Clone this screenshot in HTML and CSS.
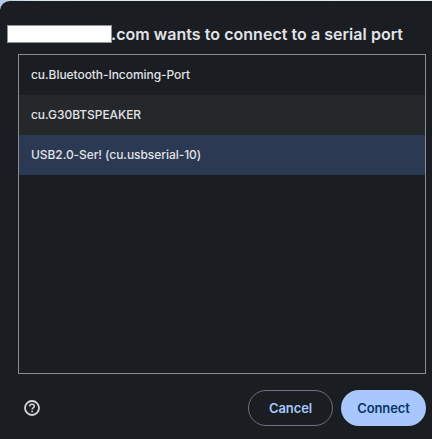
FILE: index.html
```html
<!DOCTYPE html>
<html lang="en">
<head>
<meta charset="utf-8">
<title>Serial port chooser</title>
<link rel="stylesheet" href="styles.css">
</head>
<body>
<main class="dialog">
  <h1 class="title"><span class="redacted"></span><span class="title-text">.com wants to connect to a serial port</span></h1>
  <ul class="ports">
    <li class="port">cu.Bluetooth-Incoming-Port</li>
    <li class="port port-alt">cu.G30BTSPEAKER</li>
    <li class="port port-selected">USB2.0-Ser! (cu.usbserial-10)</li>
  </ul>
  <footer class="actions">
    <svg class="help" viewBox="0 0 16 16" width="16" height="16" fill="none">
      <circle cx="8" cy="8" r="7" stroke="#d3d5d9" stroke-width="1.8"/>
      <path d="M5.7 6.5C5.7 5.1 6.6 4.3 8 4.3s2.3.8 2.3 2c0 1.6-2.2 1.6-2.2 3.3" stroke="#d3d5d9" stroke-width="1.5"/>
      <circle cx="8.1" cy="11.5" r=".9" fill="#d3d5d9"/>
    </svg>
    <button class="button cancel">Cancel</button>
    <button class="button connect">Connect</button>
  </footer>
</main>
</body>
</html>
```
FILE: styles.css
```css
* { box-sizing: border-box; }
body {
  margin: 0;
  height: 439px;
  background: linear-gradient(90deg, #b3c8ec 0, #dce9ee 40px, #e0ecec 100%);
  font-family: Inter, "Liberation Sans", sans-serif;
  overflow: hidden;
}
.dialog {
  height: 439px;
  padding: 24px 6px 0 7px;
  border-top: 1px solid transparent;
  border-radius: 10px 0 0 0;
  background: #1a1d21 padding-box;
}
.title {
  display: flex;
  align-items: center;
  height: 18px;
  margin: 0;
  color: #e1e3e8;
  font-size: 16px;
  font-weight: 600;
  line-height: 18px;
  white-space: nowrap;
}
.redacted {
  width: 105px;
  height: 18px;
  border: 1px solid #909294;
  background: #fff;
}
.title-text {
  margin-left: -1px;
  letter-spacing: 0.04px;
}
.ports {
  height: 320px;
  margin: 11px 0 0 11px;
  padding: 0;
  border: 1px solid #898c92;
  list-style: none;
}
.port {
  height: 40px;
  padding-left: 12px;
  color: #e1e3e7;
  font-size: 12px;
  font-weight: 450;
  letter-spacing: -0.06px;
  line-height: 40px;
  white-space: nowrap;
}
.port-alt { background: #25282a; }
.port-selected { background: #2c3953; }
.actions {
  display: flex;
  align-items: center;
  gap: 8px;
  height: 36px;
  margin: 16px 0 0 17px;
}
.help { margin-right: auto; }
.button {
  width: 85px;
  height: 36px;
  padding: 0;
  border: 0;
  border-radius: 18px;
  font: 600 13px/36px Inter, "Liberation Sans", sans-serif;
  letter-spacing: -0.1px;
}
.cancel {
  border: 1px solid #6d7285;
  background: transparent;
  color: #a8c7fa;
  line-height: 34px;
}
.connect {
  background: #a8c7ff;
  color: #093568;
}
```
